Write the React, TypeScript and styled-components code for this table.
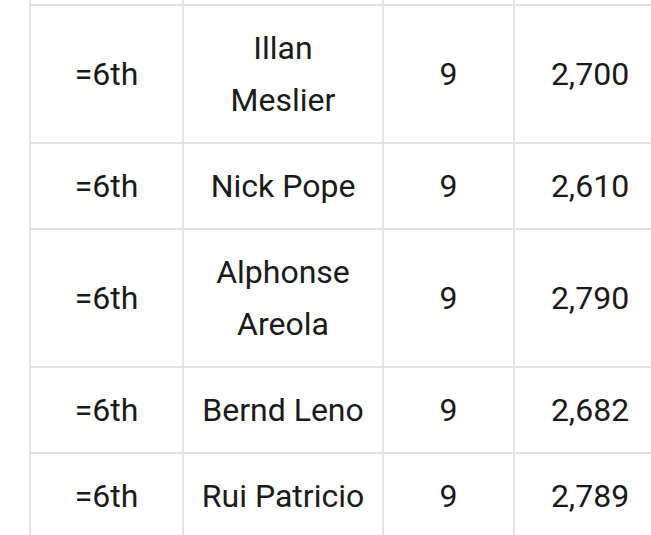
import React from "react";
import styled, { createGlobalStyle } from "styled-components";

const Global = createGlobalStyle`
  html, body {
    margin: 0;
    padding: 0;
    overflow: hidden;
    background: #ffffff;
  }
  body {
    font-family: Roboto, "Noto Sans", "Liberation Sans", sans-serif;
  }
`;

const Viewport = styled.div`
  width: 651px;
  height: 535px;
  overflow: hidden;
  background: #ffffff;
`;

const Table = styled.table`
  margin: -80px 0 0 29px;
  border-collapse: separate;
  border-spacing: 0;
  border-left: 2px solid #e6e4df;
  border-top: 2px solid #e6e4df;
  table-layout: fixed;
  width: 636px;
`;

const Cell = styled.td<{ $w: number }>`
  width: ${(p) => p.$w}px;
  box-sizing: border-box;
  padding: 16px 15px;
  border-right: 2px solid #e6e4df;
  border-bottom: 2px solid #e6e4df;
  text-align: center;
  vertical-align: middle;
  font-size: 32px;
  line-height: 52px;
  color: #1a1a1a;
  font-weight: 400;
`;

const SpacerCell = styled(Cell)`
  height: 84px;
  padding: 0;
`;

const widths = [153, 200, 131, 152];

type Row = { rank: string; name: string; apps: string; mins: string };

const rows: Row[] = [
  { rank: "=6th", name: "Illan Meslier", apps: "9", mins: "2,700" },
  { rank: "=6th", name: "Nick Pope", apps: "9", mins: "2,610" },
  { rank: "=6th", name: "Alphonse Areola", apps: "9", mins: "2,790" },
  { rank: "=6th", name: "Bernd Leno", apps: "9", mins: "2,682" },
  { rank: "=6th", name: "Rui Patricio", apps: "9", mins: "2,789" },
];

export default function App() {
  return (
    <Viewport>
      <Global />
      <Table>
        <tbody>
          <tr aria-hidden="true">
            {widths.map((w, i) => (
              <SpacerCell key={i} $w={w} />
            ))}
          </tr>
          {rows.map((r, i) => (
            <tr key={i}>
              <Cell $w={widths[0]}>{r.rank}</Cell>
              <Cell $w={widths[1]}>{r.name}</Cell>
              <Cell $w={widths[2]}>{r.apps}</Cell>
              <Cell $w={widths[3]}>{r.mins}</Cell>
            </tr>
          ))}
        </tbody>
      </Table>
    </Viewport>
  );
}
